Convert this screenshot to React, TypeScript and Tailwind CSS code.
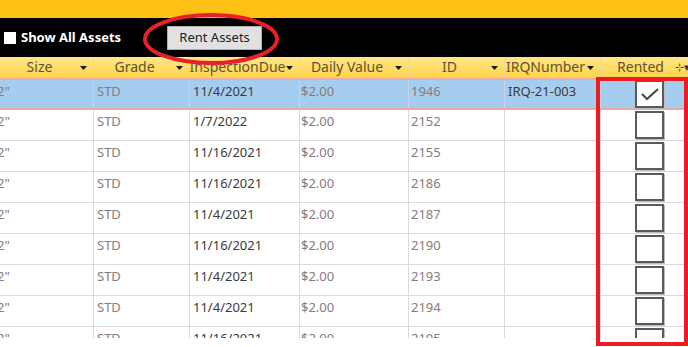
import React from "react";

const cols = [
  { title: "Size", w: "w-[94px]" },
  { title: "Grade", w: "w-[96px]" },
  { title: "InspectionDue", w: "w-[110px]" },
  { title: "Daily Value", w: "w-[109px]" },
  { title: "ID", w: "w-[96px]" },
  { title: "IRQNumber", w: "w-[96px]" },
];

const rows = [
  { due: "11/4/2021", id: "1946", irq: "IRQ-21-003", rented: true },
  { due: "1/7/2022", id: "2152", irq: "" },
  { due: "11/16/2021", id: "2155", irq: "" },
  { due: "11/16/2021", id: "2186", irq: "" },
  { due: "11/4/2021", id: "2187", irq: "" },
  { due: "11/16/2021", id: "2190", irq: "" },
  { due: "11/4/2021", id: "2193", irq: "" },
  { due: "11/4/2021", id: "2194", irq: "" },
  { due: "11/16/2021", id: "2195", irq: "" },
];

const Arrow = () => (
  <svg width="7" height="4" viewBox="0 0 7 4" className="absolute right-[6px] top-[9px]">
    <path d="M0 0h7L3.5 4z" fill="#1a1a1a" />
  </svg>
);

const Check = ({ on }: { on?: boolean }) => (
  <div className="w-[29px] h-[28px] border-2 border-[#5a5a5a] bg-white flex items-center justify-center shadow-[1px_1px_0_#bdbdbd]">
    {on && (
      <svg width="20" height="14" viewBox="0 0 20 14">
        <path d="M2 7l5 5L18 2" stroke="#4a4a4a" strokeWidth="2.2" fill="none" />
      </svg>
    )}
  </div>
);

export default function App() {
  return (
    <div className="relative w-[688px] h-[347px] bg-white overflow-hidden font-['Noto_Sans',sans-serif]">
      <div className="h-[18px] bg-[#ffc214]" />
      <div className="h-[39px] bg-black flex items-center">
        <div className="ml-[4px] w-[12px] h-[12px] bg-white" />
        <span className="ml-[5px] text-white text-[13px] font-bold">Show All Assets</span>
        <button className="ml-[46px] w-[95px] h-[24px] bg-[#e1e1e1] border border-[#adadad] text-[13px] text-[#222]">
          Rent Assets
        </button>
      </div>

      <div className="h-[281px] overflow-hidden">
        <div className="flex h-[21px] bg-gradient-to-b from-[#ffe687] to-[#ffd445] text-[14px] text-[#5f5230]">
          {cols.map((c) => (
            <div key={c.title} className={`${c.w} relative shrink-0 border-r border-[#ecd9a0] flex justify-center pr-[14px] leading-[20px] overflow-hidden whitespace-nowrap`}>
              {c.title}
              <Arrow />
            </div>
          ))}
          <div className="flex-1 relative flex justify-center leading-[20px] pr-[8px]">
            Rented
            <span className="absolute right-[-2px] top-[0px] text-[11px] text-[#333]">⊹▾</span>
          </div>
        </div>

        {rows.map((r, i) => {
          const sel = i === 0;
          return (
            <div
              key={r.id}
              className={`flex text-[13px] ${
                sel
                  ? "h-[32px] bg-[#a5cdef] border-y-2 border-[#f2a7a7]"
                  : "h-[31px] bg-white border-b border-[#dadada]"
              }`}
            >
              <div className={`w-[94px] shrink-0 border-r ${sel ? "border-[#c4d4e4]" : "border-[#dadada]"} text-[#857c7c] pl-0 pt-[2px] -indent-[3px] overflow-hidden`}>2"</div>
              <div className={`w-[96px] shrink-0 border-r ${sel ? "border-[#c4d4e4]" : "border-[#dadada]"} text-[#857c7c] pl-[3px] pt-[2px]`}>STD</div>
              <div className={`w-[110px] shrink-0 border-r ${sel ? "border-[#c4d4e4]" : "border-[#dadada]"} text-[#3a3a3a] pl-[3px] pt-[2px]`}>{r.due}</div>
              <div className={`w-[109px] shrink-0 border-r ${sel ? "border-[#c4d4e4]" : "border-[#dadada]"} text-[#857c7c] pl-[1px] pt-[2px]`}>$2.00</div>
              <div className={`w-[96px] shrink-0 border-r ${sel ? "border-[#c4d4e4]" : "border-[#dadada]"} text-[#857c7c] pl-[2px] pt-[2px]`}>{r.id}</div>
              <div className={`w-[96px] shrink-0 border-r ${sel ? "border-[#c4d4e4]" : "border-[#dadada]"} text-[#3a3a3a] pl-[3px] pt-[2px]`}>{r.irq}</div>
              <div className="flex-1 flex items-center pl-[34px]">
                <Check on={r.rented} />
              </div>
            </div>
          );
        })}
      </div>

      {/* annotations */}
      <svg className="absolute left-0 top-0 pointer-events-none" width="688" height="347">
        <ellipse cx="211" cy="39" rx="66" ry="24" fill="none" stroke="#e8202a" strokeWidth="4" />
      </svg>
      <div className="absolute left-[596px] top-[77px] w-[92px] h-[269px] border-4 border-[#ed1c24] pointer-events-none" />
    </div>
  );
}
